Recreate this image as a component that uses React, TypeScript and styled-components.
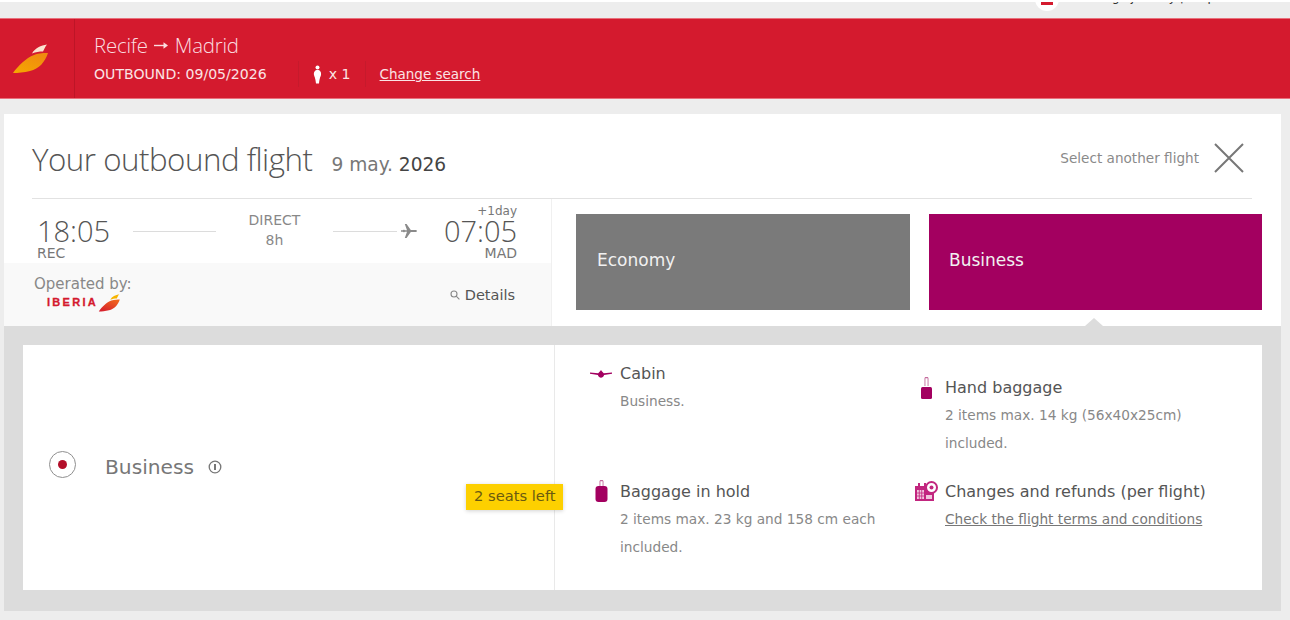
import React from 'react';
import styled, { createGlobalStyle } from 'styled-components';

const GlobalStyle = createGlobalStyle`
    html, body {
        margin: 0;
        padding: 0;
        background: #ededed;
    }
`;

const Page = styled.div`
    width: 1290px;
    height: 620px;
    overflow: hidden;
    background: #ededed;
    font-family: 'DejaVu Sans', Verdana, sans-serif;
    color: #555;
`;

const TopStrip = styled.div`
    height: 16px;
    border-top: 2px solid #fff;
    overflow: hidden;
    display: flex;
    justify-content: flex-end;
    padding-right: 75px;
`;

const TopLink = styled.div`
    display: flex;
    align-items: flex-start;
    gap: 20px;
    height: 12px;
    margin-top: -11px;
    font-size: 12px;
    line-height: 12px;
    color: #333;
    white-space: nowrap;
`;

const TopDot = styled.span`
    width: 24px;
    height: 24px;
    margin-top: -4px;
    border-radius: 50%;
    background: #fff;
    position: relative;
    &::after {
        content: '';
        position: absolute;
        left: 6px;
        top: 15px;
        width: 12px;
        height: 3px;
        background: #d41a2e;
    }
`;

const Header = styled.header`
    height: 81px;
    background: #d41a2e;
    display: flex;
    color: #fff;
    border-top: 1px solid #e8707c;
    border-bottom: 1px solid #e8707c;
    box-sizing: border-box;
`;

const LogoCell = styled.div`
    width: 75px;
    border-right: 1px solid #bd1527;
    display: flex;
    align-items: center;
    padding-left: 12px;
    box-sizing: border-box;
`;

const HeaderInfo = styled.div`
    padding: 13px 0 0 19px;
`;

const Route = styled.div`
    font-family: 'Open Sans', sans-serif;
    font-size: 20.4px;
    font-weight: 300;
    line-height: 26px;
    letter-spacing: -0.2px;
    color: #fbdde0;
    display: flex;
    align-items: center;
    gap: 6px;
`;

const HeaderMeta = styled.div`
    display: flex;
    align-items: center;
    height: 26px;
    margin-top: 3px;
    font-size: 14.1px;
    color: #fbe3e5;
`;

const MetaItem = styled.div<{ $divided?: boolean }>`
    display: flex;
    align-items: center;
    gap: 7px;
    height: 100%;
    padding: 0 14px 0 14px;
    border-left: ${props => (props.$divided ? '1px solid #c61a2c' : 'none')};
    &:first-child {
        padding-left: 0;
        padding-right: 31px;
    }
`;

const HeaderLink = styled.a`
    color: #fbe3e5;
    text-decoration: underline;
    font-size: 13.5px;
`;

const Card = styled.main`
    margin: 15px 9px 0 4px;
    height: 497px;
    background: #fff;
    display: flex;
    flex-direction: column;
`;

const CardHead = styled.div`
    height: 85px;
    margin: 0 29px 0 28px;
    border-bottom: 1px solid #e2e2e2;
    display: flex;
    align-items: center;
    justify-content: space-between;
    padding: 2px 8px 0 0;
    box-sizing: border-box;
`;

const TitleGroup = styled.div`
    display: flex;
    align-items: baseline;
    gap: 19px;
    margin-top: 3px;
`;

const Title = styled.h1`
    margin: 0;
    font-family: 'Open Sans', sans-serif;
    font-weight: 300;
    font-size: 31.3px;
    letter-spacing: -0.5px;
    color: #555;
`;

const TitleDate = styled.span`
    font-size: 18.6px;
    color: #777;
    strong {
        font-weight: 400;
        color: #444;
    }
`;

const Closer = styled.div`
    display: flex;
    align-items: center;
    gap: 15px;
    font-size: 13.6px;
    color: #8a8a8a;
    margin-top: 1px;
`;

const FlightRow = styled.div`
    flex: 0 0 127px;
    display: flex;
`;

const FlightSummary = styled.div`
    width: 547px;
    display: flex;
    flex-direction: column;
    border-right: 1px solid #f0f0f0;
`;

const Times = styled.div`
    height: 64px;
    padding: 0 34px 0 33px;
    display: grid;
    grid-template-columns: 96px 1fr 100px;
    align-items: start;
`;

const TimeBlock = styled.div<{ $end?: boolean }>`
    display: flex;
    flex-direction: column;
    align-items: ${props => (props.$end ? 'flex-end' : 'flex-start')};
    padding-top: ${props => (props.$end ? '6px' : '18px')};
`;

const NextDay = styled.div`
    font-size: 12px;
    line-height: 12px;
    color: #777;
`;

const Clock = styled.div`
    font-family: 'Open Sans', sans-serif;
    font-weight: 300;
    font-size: 29px;
    line-height: 28px;
    color: #555;
`;

const Airport = styled.div`
    font-size: 14px;
    line-height: 16px;
    color: #777;
`;

const Leg = styled.div`
    display: flex;
    align-items: flex-start;
    padding-top: 11px;
`;

const LegLine = styled.div<{ $width?: number }>`
    flex: ${props => (props.$width ? `0 0 ${props.$width}px` : '1')};
    height: 1px;
    margin-top: 21px;
    background: #dcdcdc;
`;

const LegPlane = styled.div`
    margin: 14px 0 0 4px;
    display: flex;
`;

const LegLabel = styled.div`
    width: 117px;
    text-align: center;
    font-size: 14px;
    line-height: 20px;
    color: #888;
`;

const Operator = styled.div`
    flex: 1;
    background: #f9f9f9;
    padding: 12px 36px 0 30px;
    display: flex;
    justify-content: space-between;
`;

const OperatedLabel = styled.div`
    font-size: 15px;
    line-height: 18px;
    color: #888;
`;

const OperatorLogo = styled.div`
    display: flex;
    align-items: flex-start;
    padding-left: 13px;
    margin-top: 1px;
`;

const OperatorName = styled.span`
    font-family: 'Liberation Sans', Arial, sans-serif;
    font-weight: 700;
    font-size: 11px;
    letter-spacing: 2.3px;
    line-height: 13px;
    margin-top: 2px;
    color: #d41a2e;
    -webkit-text-stroke: 0.3px #d41a2e;
`;

const DetailsLink = styled.div`
    display: flex;
    align-items: center;
    gap: 5px;
    height: 18px;
    margin-top: 11px;
    font-size: 14.5px;
    color: #555;
`;

const Tabs = styled.div`
    flex: 1;
    display: grid;
    grid-template-columns: 334px 333px;
    gap: 19px;
    padding: 15px 19px 16px 24px;
    position: relative;
`;

const Tab = styled.div<{ $active?: boolean }>`
    display: flex;
    align-items: center;
    padding: 0 0 5px ${props => (props.$active ? '20px' : '21px')};
    font-size: 17px;
    color: #f1f1f1;
    background: ${props => (props.$active ? '#a30060' : '#7a7a7a')};
    position: relative;
    ${props =>
        props.$active &&
        `&::after {
            content: '';
            position: absolute;
            left: 156px;
            bottom: -16px;
            border: 9px solid transparent;
            border-top-width: 0;
            border-bottom: 8px solid #dcdcdc;
        }`}
`;

const FareBand = styled.div`
    flex: 1;
    background: #dcdcdc;
    padding: 19px 19px 21px 19px;
    display: flex;
`;

const FarePanel = styled.div`
    flex: 1;
    background: #fff;
    display: flex;
`;

const FareOption = styled.div`
    width: 532px;
    border-right: 1px solid #e9e9e9;
    box-sizing: border-box;
    position: relative;
    display: flex;
    align-items: center;
    gap: 28px;
    padding: 0 0 0 26px;
`;

const Radio = styled.span`
    width: 27px;
    height: 27px;
    border: 1px solid #8f8f8f;
    border-radius: 50%;
    box-sizing: border-box;
    display: flex;
    align-items: center;
    justify-content: center;
    margin-top: -7px;
    &::after {
        content: '';
        width: 9px;
        height: 9px;
        border-radius: 50%;
        background: #b30f2a;
    }
`;

const FareName = styled.div`
    display: flex;
    align-items: center;
    gap: 14px;
    margin: -2px 0 0 1px;
    font-size: 20.2px;
    color: #777;
`;

const SeatsBadge = styled.div`
    position: absolute;
    left: 443px;
    top: 139px;
    width: 97px;
    height: 26px;
    box-sizing: border-box;
    padding-left: 8px;
    background: #fdd000;
    box-shadow: 0 1px 4px rgba(0, 0, 0, 0.18);
    font-size: 14.7px;
    line-height: 24px;
    color: #6a5a10;
    white-space: nowrap;
`;

const Features = styled.div`
    flex: 1;
    position: relative;
    display: grid;
    grid-template-columns: 325px 1fr;
    grid-template-rows: 1fr 1fr;
`;

const Feature = styled.div<{ $top: number }>`
    padding-top: ${props => props.$top}px;
    display: grid;
    grid-template-columns: 65px 1fr;
    grid-auto-rows: min-content;
`;

const FeatureIcon = styled.div`
    display: flex;
    align-items: center;
    justify-content: center;
    padding-left: 27px;
    height: 27px;
`;

const FeatureTitle = styled.div`
    font-size: 16px;
    line-height: 27px;
    color: #555;
    white-space: nowrap;
`;

const FeatureText = styled.div`
    grid-column: 2;
    font-size: 13.7px;
    line-height: 28px;
    color: #888;
    white-space: nowrap;
`;

const FeatureLink = styled.a`
    grid-column: 2;
    font-size: 13.7px;
    line-height: 28px;
    color: #777;
    text-decoration: underline;
    white-space: nowrap;
`;

const Wing = ({ small }: { small?: boolean }) => (
    <svg width={small ? 22 : 36} height={small ? 18 : 30} viewBox="0 0 36 30">
        <defs>
            <linearGradient id={small ? 'wingS' : 'wingL'} x1="0" y1="1" x2="0.7" y2="0">
                <stop offset="0" stopColor={small ? '#d41a2e' : '#f5a800'} />
                <stop offset="1" stopColor={small ? '#f0641e' : '#f08a10'} />
            </linearGradient>
        </defs>
        <path
            d="M1 29 C6 22 14 14 22 11 C27 9 33 9 36 9 C33 18 27 25 18 27 C12 28.5 6 29 1 29Z"
            fill={`url(#${small ? 'wingS' : 'wingL'})`}
        />
        <path
            d="M20 9.5 C23 4 29 1.5 35 0.5 C33 3 32 5.5 31 7.5 C27 7.5 24 8 20 9.5Z"
            fill={small ? '#f7b500' : '#fbe3d0'}
        />
    </svg>
);

const PersonIcon = () => (
    <svg width="9" height="19" viewBox="0 0 9 19">
        <circle cx="4.5" cy="2.4" r="2" fill="#fff" />
        <path d="M4.5 5 C7 5 8.5 7 8 10 C7.5 12 6.5 13 6 18.5 L3 18.5 C2.5 13 1.5 12 1 10 C.5 7 2 5 4.5 5Z" fill="#fff" />
    </svg>
);

const PlaneIcon = () => (
    <svg width="16" height="14" viewBox="0 0 16 14" fill="#8a8a8a">
        <path d="M0 6.2 L2 6.2 L3 5.4 L3.8 6.2 L6 6.2 L3.8 0 L5.6 0 L9.8 6 L14 6 C15.4 6 16 6.6 16 7 C16 7.4 15.4 8 14 8 L9.8 8 L5.6 14 L3.8 14 L6 7.8 L3.8 7.8 L3 8.6 L2 7.8 L0 7.8Z" />
    </svg>
);

const FrontPlaneIcon = () => (
    <svg width="22" height="10" viewBox="0 0 24 10" fill="#a30060">
        <path d="M0 3.4 L9 4.2 C10 2.6 11 2 12 0.5 C13 2 14 2.6 15 4.2 L24 3.4 L24 4.6 L15.4 6 C14.8 7.8 13.4 9 12 9 C10.6 9 9.2 7.8 8.6 6 L0 4.6Z" />
    </svg>
);

const BaggageIcon = ({ hand }: { hand?: boolean }) => (
    <svg width="13" height="22" viewBox="0 0 13 22" fill="#a30060">
        <path d="M4.5 9 L4.5 1.5 C4.5 .6 5 0 5.8 0 L7.2 0 C8 0 8.5 .6 8.5 1.5 L8.5 9 L7.6 9 L7.6 1.2 L5.4 1.2 L5.4 9Z" fill="#c46a9c" />
        {hand ? (
            <rect x="1" y="10" width="11" height="12" rx="1.5" />
        ) : (
            <rect x="0.5" y="6" width="12" height="16" rx="3" />
        )}
    </svg>
);

const ChangesIcon = () => (
    <svg width="24" height="21" viewBox="0 0 24 21">
        <path d="M1 5 L4 5 L4 2 L6 2 L6 5 L10 5 L10 2 L12 2 L12 5 L13 5 L13 10 L20 12 L20 20 L1 20Z" fill="#c2267f" />
        <rect x="3" y="9" width="7" height="9" fill="#f0c6dd" />
        <path d="M3 12 H10 M3 15 H10 M5.3 9 V18 M7.7 9 V18" stroke="#c2267f" strokeWidth="0.8" />
        <rect x="12" y="14" width="6" height="4" fill="#f0c6dd" />
        <circle cx="17.5" cy="6.5" r="5.5" fill="#fff" stroke="#c2267f" strokeWidth="2" />
        <circle cx="17.5" cy="6.5" r="2" fill="#c2267f" />
    </svg>
);

const SearchIcon = () => (
    <svg width="10" height="10" viewBox="0 0 10 10" fill="none" stroke="#888" strokeWidth="1.1">
        <circle cx="4" cy="4" r="3" />
        <path d="M6.2 6.2 L9.4 9.4" />
    </svg>
);

const InfoIcon = () => (
    <svg width="14" height="14" viewBox="0 0 14 14" fill="none" stroke="#777" strokeWidth="1.3">
        <circle cx="7" cy="7" r="5.8" />
        <path d="M7 4 V10" strokeWidth="2" />
    </svg>
);

const CloseIcon = () => (
    <svg width="30" height="30" viewBox="0 0 30 30" stroke="#777" strokeWidth="2" fill="none">
        <path d="M1 1 L29 29 M29 1 L1 29" />
    </svg>
);

const ArrowIcon = () => (
    <svg width="15" height="9" viewBox="0 0 15 9" fill="none" stroke="#fbdde0" strokeWidth="1.4">
        <path d="M0 4.5 H12" />
        <path d="M9.5 1.2 L14 4.5 L9.5 7.8Z" fill="#fbdde0" stroke="none" />
    </svg>
);

const App = () => (
    <Page>
        <GlobalStyle />
        <TopStrip>
            <TopLink>
                <TopDot />
                <span>Manage journey | Help</span>
            </TopLink>
        </TopStrip>
        <Header>
            <LogoCell>
                <Wing />
            </LogoCell>
            <HeaderInfo>
                <Route>
                    Recife <ArrowIcon /> Madrid
                </Route>
                <HeaderMeta>
                    <MetaItem>OUTBOUND: 09/05/2026</MetaItem>
                    <MetaItem $divided>
                        <PersonIcon /> x 1
                    </MetaItem>
                    <MetaItem $divided>
                        <HeaderLink>Change search</HeaderLink>
                    </MetaItem>
                </HeaderMeta>
            </HeaderInfo>
        </Header>
        <Card>
            <CardHead>
                <TitleGroup>
                    <Title>Your outbound flight</Title>
                    <TitleDate>
                        9 may. <strong>2026</strong>
                    </TitleDate>
                </TitleGroup>
                <Closer>
                    Select another flight
                    <CloseIcon />
                </Closer>
            </CardHead>
            <FlightRow>
                <FlightSummary>
                    <Times>
                        <TimeBlock>
                            <Clock>18:05</Clock>
                            <Airport>REC</Airport>
                        </TimeBlock>
                        <Leg>
                            <LegLine $width={83} />
                            <LegLabel>
                                DIRECT
                                <br />
                                8h
                            </LegLabel>
                            <LegLine />
                            <LegPlane>
                                <PlaneIcon />
                            </LegPlane>
                        </Leg>
                        <TimeBlock $end>
                            <NextDay>+1day</NextDay>
                            <Clock>07:05</Clock>
                            <Airport>MAD</Airport>
                        </TimeBlock>
                    </Times>
                    <Operator>
                        <div>
                            <OperatedLabel>Operated by:</OperatedLabel>
                            <OperatorLogo>
                                <OperatorName>IBERIA</OperatorName>
                                <Wing small />
                            </OperatorLogo>
                        </div>
                        <DetailsLink>
                            <SearchIcon />
                            Details
                        </DetailsLink>
                    </Operator>
                </FlightSummary>
                <Tabs>
                    <Tab>Economy</Tab>
                    <Tab $active>Business</Tab>
                </Tabs>
            </FlightRow>
            <FareBand>
                <FarePanel>
                    <FareOption>
                        <Radio />
                        <FareName>
                            Business
                            <InfoIcon />
                        </FareName>
                        <SeatsBadge>2 seats left</SeatsBadge>
                    </FareOption>
                    <Features>
                        <Feature $top={15}>
                            <FeatureIcon>
                                <FrontPlaneIcon />
                            </FeatureIcon>
                            <FeatureTitle>Cabin</FeatureTitle>
                            <FeatureText>Business.</FeatureText>
                        </Feature>
                        <Feature $top={29}>
                            <FeatureIcon>
                                <BaggageIcon hand />
                            </FeatureIcon>
                            <FeatureTitle>Hand baggage</FeatureTitle>
                            <FeatureText>2 items max. 14 kg (56x40x25cm)</FeatureText>
                            <FeatureText>included.</FeatureText>
                        </Feature>
                        <Feature $top={10}>
                            <FeatureIcon>
                                <BaggageIcon />
                            </FeatureIcon>
                            <FeatureTitle>Baggage in hold</FeatureTitle>
                            <FeatureText>2 items max. 23 kg and 158 cm each</FeatureText>
                            <FeatureText>included.</FeatureText>
                        </Feature>
                        <Feature $top={10}>
                            <FeatureIcon>
                                <ChangesIcon />
                            </FeatureIcon>
                            <FeatureTitle>Changes and refunds (per flight)</FeatureTitle>
                            <FeatureLink>Check the flight terms and conditions</FeatureLink>
                        </Feature>
                    </Features>
                </FarePanel>
            </FareBand>
        </Card>
    </Page>
);

export default App;
